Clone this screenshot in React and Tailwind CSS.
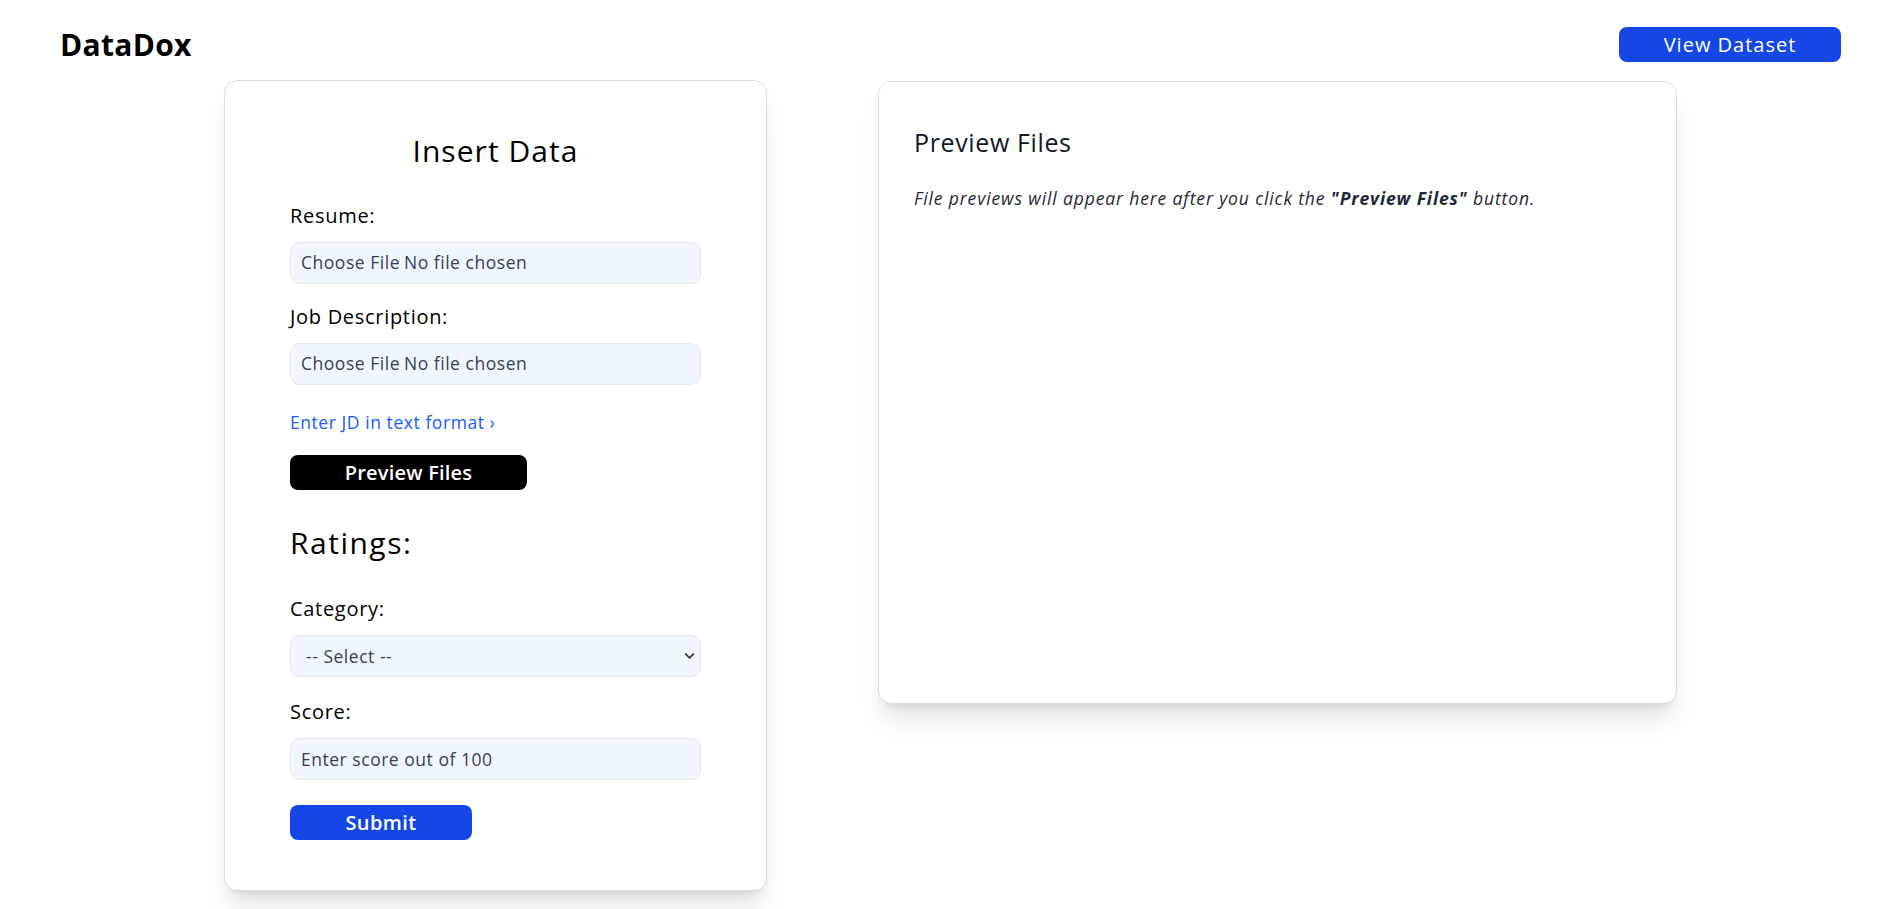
import React from 'react';
import { ChevronDown } from 'lucide-react';

const font = { fontFamily: '"Open Sans", "DejaVu Sans", sans-serif' };

const Label = ({ children, className = '' }) => (
    <label className={`block text-[20px] leading-[30px] tracking-[0.035em] text-black mb-[11px] ${className}`}>{children}</label>
);

const fieldBox = 'block w-full h-[42px] rounded-[10px] border border-[#e1e7ef] bg-[#eff6ff] text-[17.5px] tracking-[0.03em] text-[#364153] outline-none';

export default function App() {
    return (
        <div className="min-h-screen bg-white pb-[20px]" style={font}>
            {/* Top bar */}
            <header className="flex items-center justify-between px-[60px] pt-[27px]">
                <h1 className="text-[30px] leading-[35px] font-bold tracking-[0.01em] text-black">DataDox</h1>
                <button className="w-[222px] h-[35px] rounded-[8px] bg-[#1447e6] text-white text-[20px] font-medium tracking-[0.05em]">
                    View Dataset
                </button>
            </header>

            <main className="flex items-start justify-center gap-[111px] mt-[18px]">
                {/* Insert form */}
                <div className="w-[543px] rounded-[13px] border border-[#d8dbe2] bg-white shadow-xl px-[65px] pt-[50px] pb-[50px]">
                    <h2 className="text-center text-[30px] leading-[40px] font-medium tracking-[0.035em] text-black mb-[30px]">Insert Data</h2>

                    <Label>Resume:</Label>
                    <input type="file" className={`${fieldBox} pl-[10px] pt-[6px]`} />

                    <Label className="mt-[18px]">Job Description:</Label>
                    <input type="file" className={`${fieldBox} pl-[10px] pt-[6px]`} />

                    <a href="#" className="block mt-[24px] text-[17.5px] leading-[26px] tracking-[0.032em] text-[#155dfc]">
                        Enter JD in text format &rsaquo;
                    </a>

                    <button className="mt-[20px] w-[237px] h-[35px] rounded-[8px] bg-black text-white text-[20px] font-semibold tracking-[0.01em]">
                        Preview Files
                    </button>

                    <h3 className="mt-[33px] text-[30px] leading-[40px] font-medium tracking-[0.05em] text-black">Ratings:</h3>

                    <Label className="mt-[31px]">Category:</Label>
                    <div className="relative">
                        <select className={`${fieldBox} appearance-none pl-[15px]`} defaultValue="">
                            <option value="">-- Select --</option>
                            <option value="technical">Technical</option>
                            <option value="experience">Experience</option>
                        </select>
                        <ChevronDown
                            size={15}
                            strokeWidth={3.2}
                            className="pointer-events-none absolute right-[4px] top-1/2 -translate-y-1/2 text-[#364153]"
                        />
                    </div>

                    <Label className="mt-[20px]">Score:</Label>
                    <input
                        type="text"
                        placeholder="Enter score out of 100"
                        className={`${fieldBox} pl-[10px] placeholder:text-[#364153]`}
                    />

                    <button className="mt-[25px] w-[182px] h-[35px] rounded-[8px] bg-[#1447e6] text-white text-[20px] font-semibold tracking-[0.02em]">
                        Submit
                    </button>
                </div>

                {/* Preview pane */}
                <div className="w-[799px] h-[623px] mt-[1px] rounded-[13px] border border-[#d8dbe2] bg-white shadow-xl pl-[35px] pr-[37px] pt-[42px]">
                    <h2 className="text-[25px] leading-[36px] font-medium tracking-[0.025em] text-[#101828] mb-[25px]">Preview Files</h2>
                    <p className="text-[17.5px] leading-[26px] italic tracking-[0.05em] text-[#1e2939]">
                        File previews will appear here after you click the{' '}
                        <strong className="font-bold">"Preview Files"</strong> button.
                    </p>
                </div>
            </main>
        </div>
    );
}
